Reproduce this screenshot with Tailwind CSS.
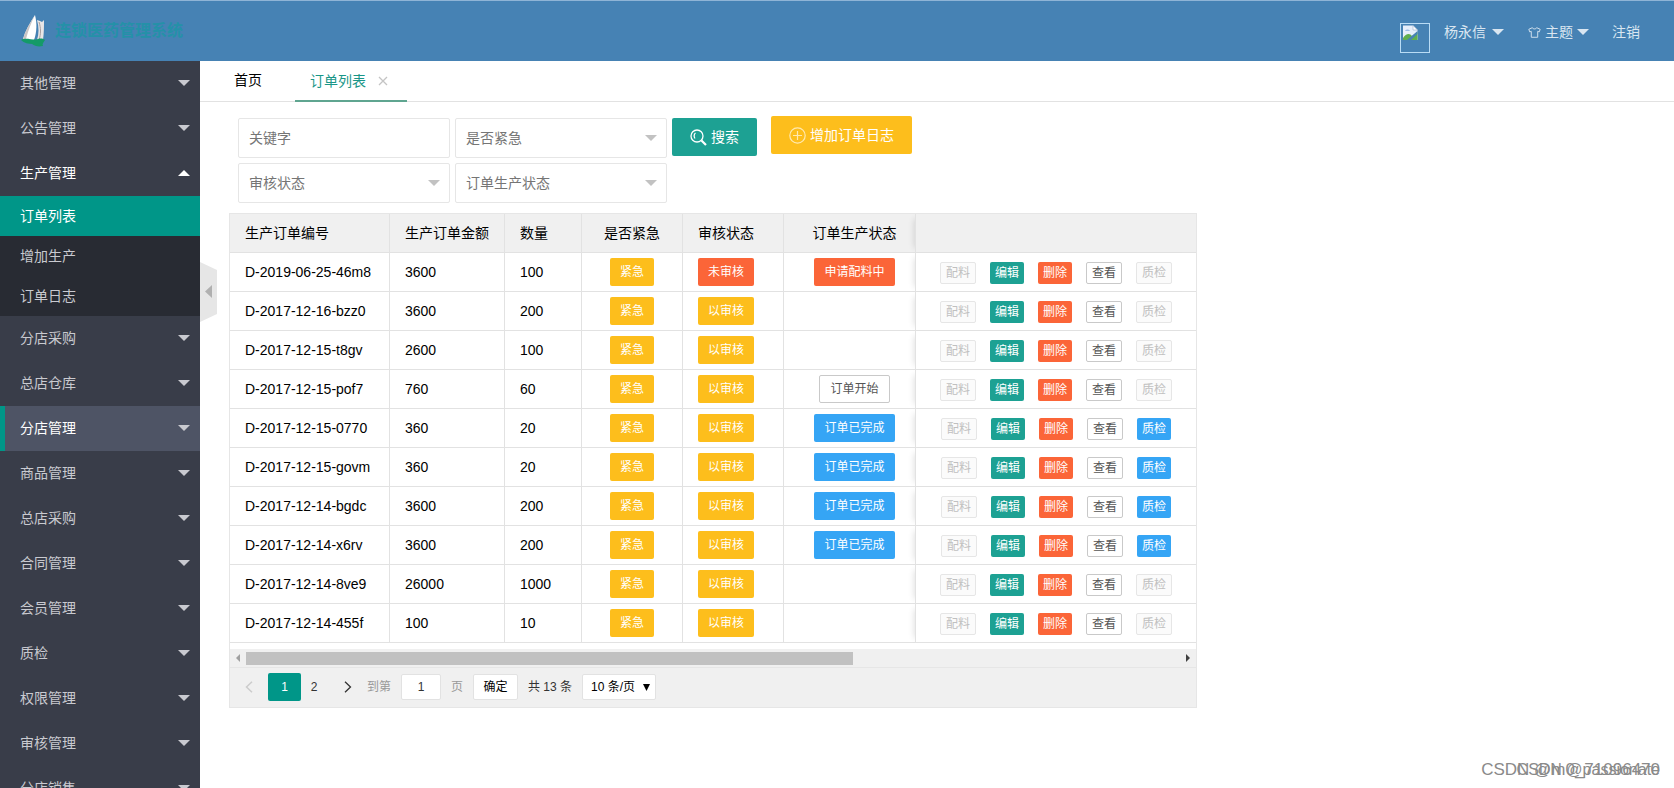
<!DOCTYPE html>
<html lang="zh-CN">
<head>
<meta charset="utf-8">
<meta name="viewport" content="width=device-width, initial-scale=1">
<title>订单列表</title>
<script src="https://cdn.jsdelivr.net/npm/@tailwindcss/browser@4"></script>
</head>
<body class="h-screen overflow-hidden flex flex-col bg-white text-sm text-black font-['Liberation_Sans','Noto_Sans_CJK_SC',sans-serif]">

<header class="flex-none h-[61px] bg-[#4682b4] border-t border-[#8fb4d6] flex items-center justify-between pl-5 pr-[34px]">
  <a href="#" class="flex items-center gap-2 text-base font-bold text-[#2491a8]">
    <svg class="w-[27px] h-[34px]" viewBox="0 0 27 34" aria-hidden="true">
      <path d="M15 1C10 9 5 17 3 25L14 26C17 18 17 9 15 1Z" fill="#fff"/>
      <path d="M15 1C10 9 5 17 3 25L6 25C8 17 11 9 15 1Z" fill="#c9c4c4"/>
      <path d="M17 6C19 13 19 20 17 26L23 26C24 19 24 12 24 6L22 8L20 7Z" fill="#e9e6e6"/>
      <path d="M19 8C21 14 21 20 19 26" fill="none" stroke="#a99f9f"/>
      <path d="M1 26C7 23 12 27 18 25C21 24 24 25 25 26C23 29 22 30 23 32C18 33 15 32 12 30C9 30 4 29 1 26Z" fill="#149a68"/>
    </svg>
    <span>连锁医药管理系统</span>
  </a>
  <nav class="flex items-center text-[#d9e6f1] pt-0.5">
    <svg class="w-[30px] h-[30px] mt-3 mr-3.5" viewBox="0 0 30 30" role="img" aria-label="头像">
      <rect x=".5" y=".5" width="29" height="29" fill="none" stroke="#b9dcf5"/>
      <path d="M3 2.500H13L17.500 7V17H3Z" fill="#e6eefa"/>
      <path d="M13 2.500V7H17.500Z" fill="#fff" stroke="#9fb4cc" stroke-width=".6"/>
      <path d="M5 8C6 6 9 6 10 8Z" fill="#9dbbe6"/>
      <path d="M3 17V15C6 10 10 10 12 13L17.500 9V17Z" fill="#5fae4e"/>
      <path d="M7 17L17.500 8V11L11 17Z" fill="#4682b4"/>
    </svg>
    <a href="#" class="flex items-center gap-1.5">杨永信
      <svg class="w-3 h-1.5" viewBox="0 0 12 6" fill="currentColor"><path d="M0 0H12L6 6Z"/></svg></a>
    <a href="#" class="flex items-center ml-6 gap-1">
      <svg class="w-[13px] h-[11px]" viewBox="0 0 14 12" fill="none" stroke="currentColor"><path d="M4.500 .8C5.500 2.500 8.500 2.500 9.500 .8L13.200 2.500L12.200 5.300L10.500 4.800V11.200H3.500V4.800L1.800 5.300L.8 2.500Z"/></svg>
      主题
      <svg class="w-3 h-1.5" viewBox="0 0 12 6" fill="currentColor"><path d="M0 0H12L6 6Z"/></svg></a>
    <a href="#" class="ml-[23px]">注销</a>
  </nav>
</header>

<div class="flex-1 min-h-0 flex">
  <aside class="flex-none w-[200px] overflow-hidden bg-[#393d49] text-[#c9cad0]">
    <ul id="menu"></ul>
  </aside>

  <main class="flex-1 min-w-0 relative">
    <button aria-label="收起菜单" class="absolute left-0 top-[201px] w-[17px] h-[60px]">
      <svg class="w-[17px] h-[60px]" viewBox="0 0 17 60"><path d="M0 0L17 8V52L0 60Z" fill="#e6e6e6"/><path d="M12 23V36L5 29.500Z" fill="#b0b0b0"/></svg>
    </button>

    <div class="h-[41px] border-b border-[#e2e2e2] flex pl-[19px]">
      <a href="#" class="px-[15px] leading-[38px]">首页</a>
      <a href="#" class="ml-[18px] h-[41px] px-[15px] leading-[38px] text-[#199688] border-b-2 border-[#5fa590] flex items-center gap-3">订单列表
        <svg class="w-2.5 h-2.5 mr-1" viewBox="0 0 10 10" stroke="#c4c4c4" stroke-width="1.300"><path d="M1 1L9 9M9 1L1 9"/></svg></a>
    </div>

    <div class="pl-[29px] pt-3.5 pr-4">
      <form class="flex items-start pl-[9px]" onsubmit="return false">
        <div class="grid grid-cols-[212px_212px] gap-[5px] mt-0.5 text-[#757575]">
          <input aria-label="关键字" placeholder="关键字" class="h-10 border border-[#e6e6e6] rounded-xs px-2.5 placeholder:text-[#757575]">
          <div class="relative">
            <select aria-label="是否紧急" class="appearance-none w-full h-10 border border-[#e6e6e6] rounded-xs px-2.5 bg-white"><option>是否紧急</option></select>
            <svg class="absolute right-2.5 top-[17px] w-3 h-1.5 pointer-events-none" viewBox="0 0 12 6" fill="#c2c2c2"><path d="M0 0H12L6 6Z"/></svg>
          </div>
          <div class="relative">
            <select aria-label="审核状态" class="appearance-none w-full h-10 border border-[#e6e6e6] rounded-xs px-2.5 bg-white"><option>审核状态</option></select>
            <svg class="absolute right-2.5 top-[17px] w-3 h-1.5 pointer-events-none" viewBox="0 0 12 6" fill="#c2c2c2"><path d="M0 0H12L6 6Z"/></svg>
          </div>
          <div class="relative">
            <select aria-label="订单生产状态" class="appearance-none w-full h-10 border border-[#e6e6e6] rounded-xs px-2.5 bg-white"><option>订单生产状态</option></select>
            <svg class="absolute right-2.5 top-[17px] w-3 h-1.5 pointer-events-none" viewBox="0 0 12 6" fill="#c2c2c2"><path d="M0 0H12L6 6Z"/></svg>
          </div>
        </div>
        <button class="mt-0.5 ml-[5px] h-[38px] w-[85px] rounded-xs bg-[#1da193] text-white flex items-center justify-center gap-1">
          <svg class="w-[17px] h-[17px]" viewBox="0 0 17 17" fill="none" stroke="currentColor" stroke-width="1.300"><circle cx="7" cy="7" r="6"/><path d="M5.500 4C4 5 3.600 7.500 5 9.500"/><path d="M11.500 11.500L16 16" stroke-width="2.200"/></svg>
          搜索</button>
        <button class="ml-3.5 h-[38px] w-[141px] rounded-xs bg-[#fdbe1c] text-white flex items-center justify-center gap-1">
          <svg class="w-[17px] h-[17px]" viewBox="0 0 17 17" fill="none" stroke="#ffe9b0" stroke-width="1.200"><circle cx="8.500" cy="8.500" r="7.700"/><path d="M8.500 4V13M4 8.500H13"/></svg>
          增加订单日志</button>
      </form>

      <section class="mt-2.5 w-full max-w-[968px] border border-[#e6e6e6] bg-[#f0f0f0]">
        <div class="bg-white overflow-hidden">
        <table class="w-full table-fixed border-separate border-spacing-0">
          <colgroup><col class="w-[160px]"><col class="w-[115px]"><col class="w-[77px]"><col class="w-[101px]"><col class="w-[101px]"><col class="w-[131px]"><col></colgroup>
          <thead>
            <tr class="h-[39px] bg-[#f0f0f0] text-left *:font-normal *:border-b *:border-[#e2e2e2]">
              <th class="pl-[15px] border-r">生产订单编号</th><th class="pl-[15px] border-r">生产订单金额</th><th class="pl-[15px] border-r">数量</th>
              <th class="text-center border-r">是否紧急</th><th class="pl-[15px] border-r">审核状态</th><th class="pl-2.5 text-center">订单生产状态</th>
              <th class="border-l shadow-[-6px_0_6px_-5px_rgba(0,0,0,0.12)]" aria-label="操作"></th>
            </tr>
          </thead>
          <tbody id="rows"></tbody>
        </table>
        </div>
        <div class="h-[25px] border-t-[6px] border-white flex items-center justify-between border-b border-b-[#e6e6e6]" aria-hidden="true">
          <svg class="w-4 h-2" viewBox="0 0 16 8"><path d="M10 0V8L6 4Z" fill="#a0a0a0"/></svg>
          <span class="flex-1"><span class="block h-[13px] w-[65%] bg-[#c1c1c1]"></span></span>
          <svg class="w-4 h-2" viewBox="0 0 16 8"><path d="M6 0V8L10 4Z" fill="#404040"/></svg>
        </div>
        <nav class="h-[39px] pb-0.5 flex items-center text-xs text-[#333]" aria-label="分页">
          <button class="w-[38px] flex justify-center" aria-label="上一页"><svg class="w-2 h-3" viewBox="0 0 8 12" fill="none" stroke="#ccc" stroke-width="1.500"><path d="M7 .7L1.500 6L7 11.300"/></svg></button>
          <button class="w-[33px] h-7 rounded-xs bg-[#009688] text-white">1</button>
          <button class="w-[26px]">2</button>
          <button class="w-[26px] flex justify-center ml-2" aria-label="下一页"><svg class="w-2 h-3" viewBox="0 0 8 12" fill="none" stroke="#333" stroke-width="1.300"><path d="M1 .7L6.500 6L1 11.300"/></svg></button>
          <label for="page" class="ml-1.5 text-[#999]">到第</label>
          <input id="page" value="1" class="ml-2.5 w-10 h-[26px] bg-white border border-[#e2e2e2] rounded-xs text-center">
          <span class="ml-2.5 text-[#999]">页</span>
          <button class="ml-2.5 w-[45px] h-[26px] bg-white border border-[#e2e2e2] rounded-xs text-black">确定</button>
          <span class="ml-2.5">共 13 条</span>
          <span class="relative ml-2.5">
            <select aria-label="每页条数" class="appearance-none w-[74px] h-[26px] bg-white border border-[#e2e2e2] rounded-xs pl-2 text-black"><option>10 条/页</option></select>
            <svg class="absolute right-1.5 top-2.5 w-[7px] h-[7px] pointer-events-none" viewBox="0 0 7 7"><path d="M0 0H7L3.500 7Z"/></svg>
          </span>
        </nav>
      </section>
    </div>
  </main>
</div>

<div class="absolute right-3.5 bottom-1.5 grid items-center justify-items-end text-[#8a8a8a]">
  <span class="col-start-1 row-start-1 text-[17px]">CSDN @m0_71096470</span>
  <span class="col-start-1 row-start-1 text-base">CSDN @passionate</span>
</div>

<script>
const caret = '<svg class="w-3 h-1.5" viewBox="0 0 12 6" fill="currentColor"><path d="M0 0H12L6 6Z"/></svg>';
const up = '<svg class="w-3 h-1.5" viewBox="0 0 12 6" fill="currentColor"><path d="M0 6H12L6 0Z"/></svg>';
const item = 'h-[45px] pb-0.5 flex items-center justify-between pl-5 pr-2.5';
document.getElementById('menu').innerHTML = ['其他管理','公告管理','生产管理','分店采购','总店仓库','分店管理','商品管理','总店采购','合同管理','会员管理','质检','权限管理','审核管理','分店销售'].map(n => {
  if (n === '生产管理') return `<li><a href="#" class="${item} text-white">${n}${up}</a>
    <ul class="bg-[#282b33]"><li><a href="#" class="h-10 flex items-center pl-5 bg-[#009688] text-white">订单列表</a></li>
    <li><a href="#" class="h-10 flex items-center pl-5">增加生产</a></li><li><a href="#" class="h-10 flex items-center pl-5">订单日志</a></li></ul></li>`;
  if (n === '分店管理') return `<li><a href="#" class="h-[45px] pb-0.5 flex items-center justify-between pl-[15px] pr-2.5 border-l-5 border-[#009688] bg-[#4e5465] text-white">${n}<span class="text-[#c9cad0]">${caret}</span></a></li>`;
  return `<li><a href="#" class="${item}">${n}${caret}</a></li>`;
}).join('');

const tag = 'h-7 px-2.5 text-xs rounded-xs align-middle';
const tone = {
  y: 'bg-[#fdbe1c] text-white', r: 'bg-[#fb6538] text-white', b: 'bg-[#35a5f5] text-white',
  g: 'bg-[#1da193] text-white', w: 'bg-white border border-[#c9c9c9] text-[#555]', d: 'bg-[#fbfbfb] border border-[#e6e6e6] text-[#c0c0c0]'
};
const act = 'h-[22px] px-[5px] text-xs leading-5 rounded-xs';
const data = [
  ['D-2019-06-25-46m8','3600','100','未审核','申请配料中','r'],
  ['D-2017-12-16-bzz0','3600','200'], ['D-2017-12-15-t8gv','2600','100'],
  ['D-2017-12-15-pof7','760','60','','订单开始','w'],
  ['D-2017-12-15-0770','360','20','','订单已完成','b'], ['D-2017-12-15-govm','360','20','','订单已完成','b'],
  ['D-2017-12-14-bgdc','3600','200','','订单已完成','b'], ['D-2017-12-14-x6rv','3600','200','','订单已完成','b'],
  ['D-2017-12-14-8ve9','26000','1000'], ['D-2017-12-14-455f','100','10']
];
document.getElementById('rows').innerHTML = data.map(([id, sum, n, audit, st, c]) => `
  <tr class="h-[39px] *:border-b *:border-[#e2e2e2]">
    <td class="pl-[15px] border-r">${id}</td><td class="pl-[15px] border-r">${sum}</td><td class="pl-[15px] border-r">${n}</td>
    <td class="text-center border-r"><button class="${tag} ${tone.y}">紧急</button></td>
    <td class="pl-[15px] border-r"><button class="${tag} ${audit ? tone.r : tone.y}">${audit || '以审核'}</button></td>
    <td class="pl-2.5 text-center">${st ? `<button class="${tag} ${tone[c]}">${st}</button>` : ''}</td>
    <td class="border-l bg-white shadow-[-6px_0_6px_-5px_rgba(0,0,0,0.12)]"><div class="flex justify-center gap-3.5 pt-0.5">
      <button disabled class="${act} ${tone.d}">配料</button><button class="${act} ${tone.g}">编辑</button><button class="${act} ${tone.r}">删除</button><button class="${act} ${tone.w}">查看</button><button ${c === 'b' ? '' : 'disabled'} class="${act} ${c === 'b' ? tone.b : tone.d}">质检</button>
    </div></td>
  </tr>`).join('');
</script>
</body>
</html>
